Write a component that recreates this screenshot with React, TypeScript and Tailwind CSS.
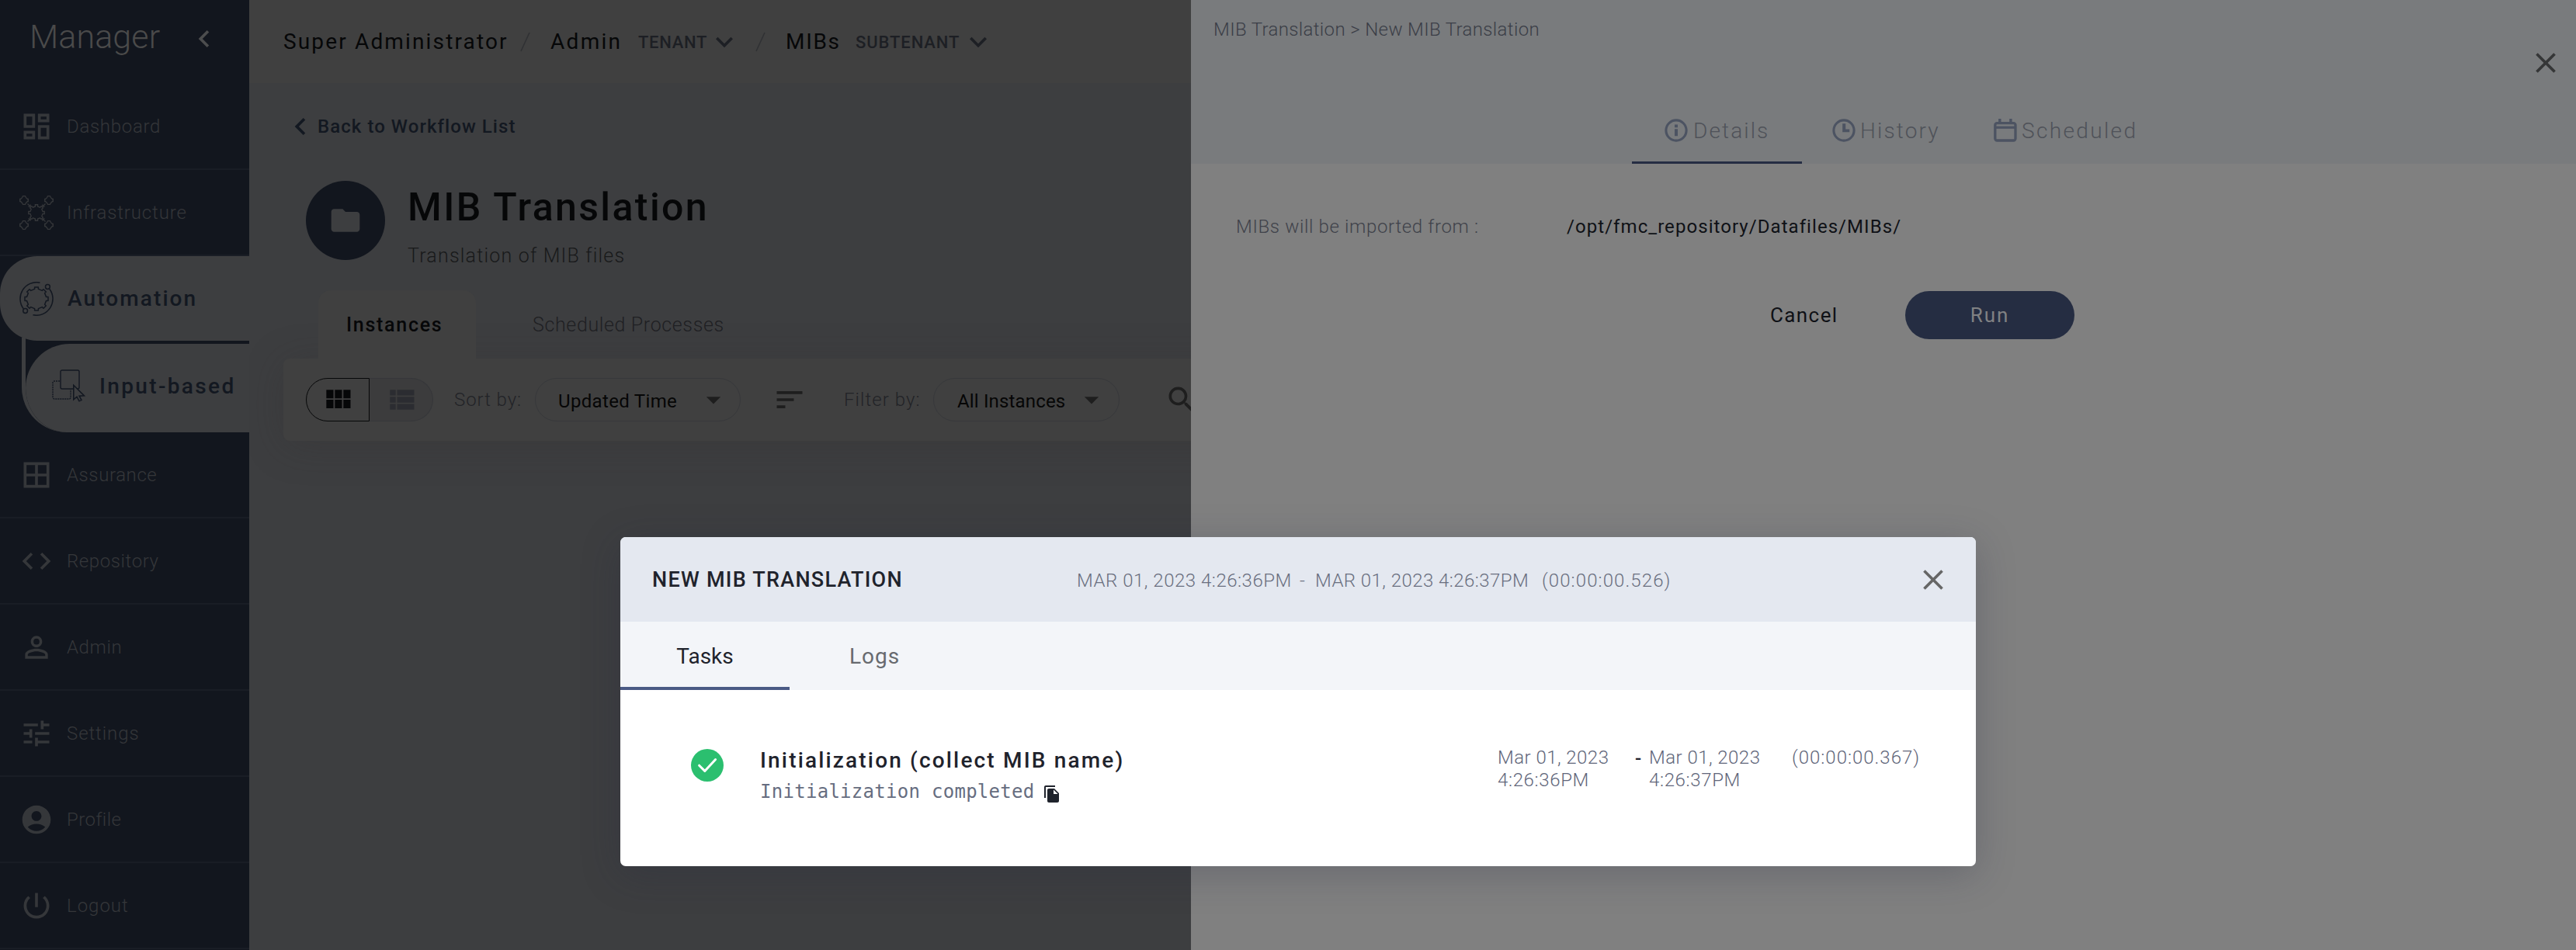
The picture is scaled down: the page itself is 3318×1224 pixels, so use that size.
import type { ReactNode } from 'react'
import {
  MdChevronLeft,
  MdClose,
  MdCode,
  MdExpandMore,
  MdOutlineDashboard,
  MdPersonOutline,
  MdTune,
  MdAccountCircle,
  MdPowerSettingsNew,
  MdFolder,
  MdArrowDropDown,
  MdSort,
  MdSearch,
  MdFileCopy,
} from 'react-icons/md'

function gearPath(cx: number, cy: number, outer: number, inner: number, teeth: number) {
  const points: string[] = []
  const step = (Math.PI * 2) / teeth
  for (let i = 0; i < teeth; i++) {
    const a = i * step - Math.PI / 2
    const corners: [number, number][] = [
      [inner, a - step * 0.24],
      [outer, a - step * 0.2],
      [outer, a + step * 0.2],
      [inner, a + step * 0.24],
    ]
    for (const [r, t] of corners) {
      points.push(`${(cx + r * Math.cos(t)).toFixed(2)} ${(cy + r * Math.sin(t)).toFixed(2)}`)
    }
  }
  return `M${points.join('L')}Z`
}

function InfrastructureIcon() {
  const nodes: [number, number][] = [[6, 6], [38, 6], [6, 38], [38, 38]]
  return (
    <svg width="44" height="44" viewBox="0 0 44 44" fill="none" stroke="currentColor" strokeWidth="1.3">
      <path d={gearPath(22, 22, 10.4, 8.2, 8)} />
      {nodes.map(([x, y]) => (
        <path
          key={`${x}-${y}`}
          d={`M${x - 1.5} ${y - 5.3}h3l1 2 2 1.8h.8v3h-.8l-2 2-1 1.8h-3l-1-1.8-2-2h-.8v-3h.8l2-1.8z`}
        />
      ))}
      <path d="M10.5 10.5l3.6 3.6M14.2 11.4v2.8h-2.8M33.5 10.5l-3.6 3.6M29.8 11.4v2.8h2.8M10.5 33.5l3.6-3.6M14.2 32.6v-2.8h-2.8M33.5 33.5l-3.6-3.6M29.8 32.6v-2.8h2.8" />
    </svg>
  )
}

function AutomationIcon() {
  return (
    <svg width="44" height="44" viewBox="0 0 44 44" fill="none" stroke="currentColor" strokeWidth="1.5">
      <path d={gearPath(22, 22, 15.2, 12.8, 8)} strokeLinejoin="round" />
      <path d="M26.5 1.2A21.2 21.2 0 0 0 5.3 34.8" />
      <path d="M17.5 42.8A21.2 21.2 0 0 0 38.7 9.2" />
      <circle cx="36.4" cy="6.5" r="2.9" />
      <circle cx="7.6" cy="37.5" r="2.9" />
    </svg>
  )
}

function InputBasedIcon() {
  return (
    <svg width="44" height="42" viewBox="0 0 44 42" fill="none" stroke="currentColor" strokeWidth="1.4">
      <rect x="11" y="1" width="24" height="24" rx="2" />
      <path d="M10 15H3a2 2 0 0 0-2 2v19a2 2 0 0 0 2 2h19a2 2 0 0 0 2-2V26" strokeDasharray="2 1" />
      <path d="M27.8 20.3v18.5l4.2-3.6 3 5.6 2.9-1.4-2.8-5.3 6.2-.4z" fill="#3d3e40" strokeWidth="1.6" />
    </svg>
  )
}

function AssuranceIcon() {
  return (
    <svg width="44" height="44" viewBox="0 0 24 24" fill="currentColor">
      <path d="M3 3v18h18V3H3zm8 16H5v-6h6v6zm0-8H5V5h6v6zm8 8h-6v-6h6v6zm0-8h-6V5h6v6z" />
    </svg>
  )
}

function InfoIcon() {
  return (
    <svg width="30" height="30" viewBox="0 0 30 30" fill="currentColor">
      <circle cx="15" cy="15" r="13.1" fill="none" stroke="currentColor" strokeWidth="3.1" />
      <path d="M13 7.6h4v3.6h-4zM13 13.2h4v9h-4z" />
    </svg>
  )
}

function ClockIcon() {
  return (
    <svg width="30" height="30" viewBox="0 0 30 30" fill="currentColor">
      <circle cx="15" cy="15" r="13.1" fill="none" stroke="currentColor" strokeWidth="3.1" />
      <path d="M13.2 6.2h4v7.2h5v3.8h-9z" />
    </svg>
  )
}

function CalendarIcon() {
  return (
    <svg width="30" height="30" viewBox="0 0 30 30" fill="none" stroke="currentColor">
      <rect x="1.8" y="5.6" width="26.2" height="22.4" rx="2.5" strokeWidth="3.3" />
      <path d="M1.8 11.2h26.2" strokeWidth="3.2" />
      <path d="M7.8 0v5M21.9 0v5" strokeWidth="3.4" />
    </svg>
  )
}

type RowProps = { icon: ReactNode; label: string; text: string }

function NavRow({ icon, label, text }: RowProps) {
  return (
    <div className="flex h-[111px] shrink-0 items-center border-b-2 border-[#191d25] pl-[25px] text-[24px] font-light text-[#35373a]">
      <span className="w-[61px] shrink-0">{icon}</span>
      <span className={text}>{label}</span>
    </div>
  )
}

function Sidebar() {
  return (
    <nav className="flex w-[321px] shrink-0 flex-col overflow-hidden bg-[#12161e]">
      <div className="flex h-[108px] shrink-0 items-center pb-[8px] pl-[38px]">
        <span className="w-[203px] pb-[6px] text-[43px] font-light tracking-[0.1px] text-[#4a4a4a]">Manager</span>
        <MdChevronLeft size={44} color="#4c4d4e" />
      </div>
      <NavRow icon={<MdOutlineDashboard size={44} />} label="Dashboard" text="tracking-[0.7px]" />
      <NavRow icon={<InfrastructureIcon />} label="Infrastructure" text="tracking-[0.85px]" />
      <div className="flex h-[109px] shrink-0 items-center rounded-l-[48px] bg-[#3d3e40] pl-[25px] text-[#131821]">
        <span className="w-[62px] shrink-0"><AutomationIcon /></span>
        <span className="pt-[1px] text-[28px] font-medium tracking-[2.1px]">Automation</span>
      </div>
      <div className="-mt-[4px] h-[122px] shrink-0 pl-[28px]">
        <div className="h-full overflow-hidden rounded-bl-[58px] border-l-[5px] border-[#3d3e40] pt-[8px]">
          <div className="flex h-[114px] items-center rounded-tl-[57px] bg-[#3d3e40] pb-[6px] pl-[34px] text-[#131821]">
            <span className="w-[61px] shrink-0"><InputBasedIcon /></span>
            <span className="whitespace-nowrap pt-[2px] text-[28px] font-medium tracking-[2.35px]">Input-based</span>
          </div>
        </div>
      </div>
      <NavRow icon={<AssuranceIcon />} label="Assurance" text="tracking-[0.6px]" />
      <NavRow icon={<MdCode size={44} />} label="Repository" text="tracking-[0.6px]" />
      <NavRow icon={<MdPersonOutline size={44} />} label="Admin" text="tracking-[0.6px]" />
      <NavRow icon={<MdTune size={44} />} label="Settings" text="tracking-[0.92px]" />
      <NavRow icon={<MdAccountCircle size={44} />} label="Profile" text="tracking-[0.44px]" />
      <NavRow icon={<MdPowerSettingsNew size={44} />} label="Logout" text="tracking-[0.99px]" />
    </nav>
  )
}

function Slash() {
  return (
    <svg className="shrink-0" width="13" height="26" viewBox="0 0 13 26" fill="none" stroke="#303134" strokeWidth="1.6">
      <path d="M12 1L1 25" />
    </svg>
  )
}

function TopBar() {
  return (
    <header className="flex h-[107px] shrink-0 items-center whitespace-nowrap bg-[#404040] pl-[44px] pt-[1px] text-[28px] text-[#060708]">
      <span className="w-[305px] shrink-0 tracking-[2.15px]">Super Administrator</span>
      <Slash />
      <span className="ml-[26px] w-[113px] shrink-0 tracking-[2.3px]">Admin</span>
      <span className="w-[89px] shrink-0 text-[22px] font-medium tracking-[0.7px] text-[#1d1f24]">TENANT</span>
      <MdExpandMore className="shrink-0" size={44} color="#1d1f24" />
      <span className="w-[18px] shrink-0" />
      <Slash />
      <span className="ml-[26px] w-[90px] shrink-0 tracking-[1.7px]">MIBs</span>
      <span className="w-[136px] shrink-0 text-[22px] font-medium tracking-[0.9px] text-[#1d1f24]">SUBTENANT</span>
      <MdExpandMore className="shrink-0" size={44} color="#1d1f24" />
    </header>
  )
}

function ViewToggle() {
  return (
    <div className="flex h-[56px] w-[164px] shrink-0">
      <div className="flex w-[82px] items-center justify-center rounded-l-[28px] border border-[#060708] text-[#060708]">
        <svg width="44" height="44" viewBox="0 0 24 24" fill="currentColor">
          <path d="M4 11h5V5H4v6zm0 7h5v-6H4v6zm6 0h5v-6h-5v6zm6 0h5v-6h-5v6zm-6-7h5V5h-5v6zm6-6v6h5V5h-5z" />
        </svg>
      </div>
      <div className="flex w-[82px] items-center justify-center rounded-r-[28px] border border-l-0 border-[#36373a] bg-[#3c3c3d] text-[#2b2c31]">
        <svg width="44" height="44" viewBox="0 0 24 24" fill="currentColor">
          <path d="M4 14h4v-4H4v4zm0 5h4v-4H4v4zM4 9h4V5H4v4zm5 5h12v-4H9v4zm0 5h12v-4H9v4zM9 5v4h12V5H9z" />
        </svg>
      </div>
    </div>
  )
}

function Toolbar() {
  return (
    <div className="ml-[44px] flex h-[106px] w-[1300px] shrink-0 items-center whitespace-nowrap rounded-[8px] bg-[#404040] pl-[29px] text-[24px] shadow-[0_6px_50px_rgba(48,45,42,0.25)]">
      <ViewToggle />
      <span className="ml-[27px] w-[104px] shrink-0 font-light tracking-[0.93px] text-[#222327]">Sort by:</span>
      <div className="flex h-[56px] w-[265px] shrink-0 items-center justify-between rounded-full border border-[#37383b] pl-[29px] pr-[12px] text-[#060606]">
        <span className="pt-[4px] tracking-[0.33px]">Updated Time</span>
        <MdArrowDropDown size={44} color="#1e1e1e" />
      </div>
      <MdSort className="ml-[41px] shrink-0" size={44} color="#1e1e1e" />
      <span className="ml-[48px] w-[115px] shrink-0 font-light tracking-[1.06px] text-[#222327]">Filter by:</span>
      <div className="flex h-[56px] w-[240px] shrink-0 items-center justify-between rounded-full border border-[#37383b] pl-[30px] pr-[13px] text-[#060606]">
        <span className="pt-[4px] tracking-[0.16px]">All Instances</span>
        <MdArrowDropDown size={44} color="#1e1e1e" />
      </div>
      <MdSearch className="ml-[58px] shrink-0" size={44} color="#1e1e1e" />
    </div>
  )
}

function Main() {
  return (
    <main className="flex w-[1213px] shrink-0 flex-col overflow-hidden bg-[#3d3e40]">
      <TopBar />
      <div className="flex h-[112px] shrink-0 items-center pl-[44px] text-[#131821]">
        <MdChevronLeft size={44} />
        <span className="text-[24px] font-medium tracking-[1.06px]">Back to Workflow List</span>
      </div>
      <div className="flex h-[155px] shrink-0 pl-[73px] pt-[14px]">
        <div className="flex size-[102px] shrink-0 items-center justify-center rounded-full bg-[#12161e]">
          <MdFolder size={44} color="#3d3e40" />
        </div>
        <div className="ml-[29px] flex flex-col pt-[1px]">
          <h1 className="text-[50px] leading-[67px] font-medium tracking-[2.4px] text-[#060708]">MIB Translation</h1>
          <p className="mt-[12px] text-[25px] leading-[34px] font-light tracking-[1.2px] text-[#18191a]">Translation of MIB files</p>
        </div>
      </div>
      <div className="relative z-10 flex h-[88px] shrink-0 items-center pl-[89px] text-[25px]">
        <div className="flex h-full w-[203px] items-center rounded-t-[16px] bg-[#404040] pl-[36px] pt-[2px] font-medium tracking-[1.72px] text-[#060708]">Instances</div>
        <div className="ml-[73px] pt-[2px] font-light tracking-[0.63px] text-[#1f2023]">Scheduled Processes</div>
      </div>
      <Toolbar />
    </main>
  )
}

function Drawer() {
  return (
    <aside className="flex min-w-0 flex-1 flex-col bg-[#808080]">
      <div className="flex h-[211px] shrink-0 flex-col bg-[#797b7d]">
        <div className="flex h-[125px] shrink-0 items-start justify-between pl-[29px] pr-[17px]">
          <span className="text-[24px] leading-[76px] font-light tracking-[0.36px] text-[#3b3e47]">{'MIB Translation > New MIB Translation'}</span>
          <MdClose className="mt-[59px]" size={44} color="#353637" />
        </div>
        <div className="flex h-[86px] pl-[568px] text-[28px] font-light text-[#4f5259]">
          <div className="flex w-[219px] items-center border-b-[3px] border-[#252d43] pl-[42px] pt-[3px]">
            <span className="text-[#4c5362]"><InfoIcon /></span>
            <span className="ml-[7px] pt-[1px] tracking-[2.1px]">Details</span>
          </div>
          <div className="flex w-[208px] items-center pl-[39px]">
            <span className="text-[#4c5362]"><ClockIcon /></span>
            <span className="ml-[6px] pt-[1px] tracking-[2.15px]">History</span>
          </div>
          <div className="flex items-center pl-[39px]">
            <span className="text-[#4c5362]"><CalendarIcon /></span>
            <span className="ml-[6px] pt-[1px] tracking-[2.35px]">Scheduled</span>
          </div>
        </div>
      </div>
      <div className="flex h-[161px] shrink-0 items-center whitespace-nowrap pl-[58px] text-[24px]">
        <span className="w-[426px] shrink-0 font-light tracking-[0.65px] text-[#3f424a]">MIBs will be imported from :</span>
        <span className="tracking-[1.06px] text-[#0f1116]">/opt/fmc_repository/Datafiles/MIBs/</span>
      </div>
      <div className="mt-[3px] flex h-[62px] shrink-0 items-center pl-[746px] text-[26px] text-[#0f1116]">
        <span className="w-[174px] tracking-[1.4px]">Cancel</span>
        <button className="h-full w-[218px] rounded-full bg-[#252d42] tracking-[2px] text-[#808183]">Run</button>
      </div>
    </aside>
  )
}

function Modal() {
  return (
    <section className="absolute left-[799px] top-[692px] flex h-[424px] w-[1746px] flex-col rounded-[7px] bg-white text-[#1f232c] shadow-[0_10px_50px_rgba(35,40,60,0.26)]">
      <div className="flex h-[109px] shrink-0 items-center whitespace-nowrap rounded-t-[7px] bg-[#e4e8f0] pl-[41px] pr-[33px] text-[24px] font-light text-[#6a6f7f]">
        <h2 className="w-[547px] shrink-0 pt-[1px] text-[27px] font-medium tracking-[1.25px] text-[#1f232c]">NEW MIB TRANSLATION</h2>
        <span className="w-[287px] shrink-0 pt-[2px] tracking-[0.52px]">MAR 01, 2023 4:26:36PM</span>
        <span className="w-[20px] shrink-0 pt-[2px]">-</span>
        <span className="w-[292px] shrink-0 pt-[2px] tracking-[0.44px]">MAR 01, 2023 4:26:37PM</span>
        <span className="pt-[2px] tracking-[1.1px]">(00:00:00.526)</span>
        <MdClose className="ml-auto" size={44} color="#666666" />
      </div>
      <div className="flex h-[88px] shrink-0 bg-[#f3f5f9] text-[28px]">
        <div className="flex w-[218px] items-center justify-center border-b-4 border-[#4a5a85] pt-[6px]">Tasks</div>
        <div className="flex w-[218px] items-center justify-center pl-[1px] pt-[2px] tracking-[1px] text-[#676a6f]">Logs</div>
      </div>
      <div className="flex pl-[91px] pt-[73px]">
        <svg className="mt-[3px] shrink-0" width="42" height="42" viewBox="0 0 42 42" fill="none">
          <circle cx="21" cy="21" r="21" fill="#2bbf6f" />
          <path d="M10.6 21.2l7.2 7.2L31.6 13.6" stroke="#ffffff" strokeWidth="3" strokeLinecap="round" strokeLinejoin="round" />
        </svg>
        <div className="ml-[47px] w-[950px] shrink-0">
          <div className="text-[28px] leading-[36px] font-medium tracking-[2.17px]">Initialization (collect MIB name)</div>
          <div className="mt-[4px] flex items-center font-['DejaVu_Sans_Mono'] text-[24px] leading-[36px] text-[#666d80]">
            <span className="w-[364px] shrink-0 tracking-[0.28px]">Initialization completed</span>
            <MdFileCopy className="mt-[5px]" size={24} color="#1f232c" />
          </div>
        </div>
        <div className="flex whitespace-nowrap text-[24px] leading-[29px] font-light text-[#5f667a]">
          <div className="w-[177px]">
            <div className="tracking-[0.46px]">Mar 01, 2023</div>
            <div className="tracking-[0.65px]">4:26:36PM</div>
          </div>
          <div className="w-[18px] pt-[1px] font-medium text-[#1f232c]">-</div>
          <div className="w-[184px]">
            <div className="tracking-[0.46px]">Mar 01, 2023</div>
            <div className="tracking-[0.65px]">4:26:37PM</div>
          </div>
          <div className="tracking-[1px]">(00:00:00.367)</div>
        </div>
      </div>
    </section>
  )
}

export default function App() {
  return (
    <div className="relative flex h-[1224px] w-[3318px] overflow-hidden font-['Roboto',sans-serif]">
      <Sidebar />
      <Main />
      <Drawer />
      <Modal />
    </div>
  )
}
